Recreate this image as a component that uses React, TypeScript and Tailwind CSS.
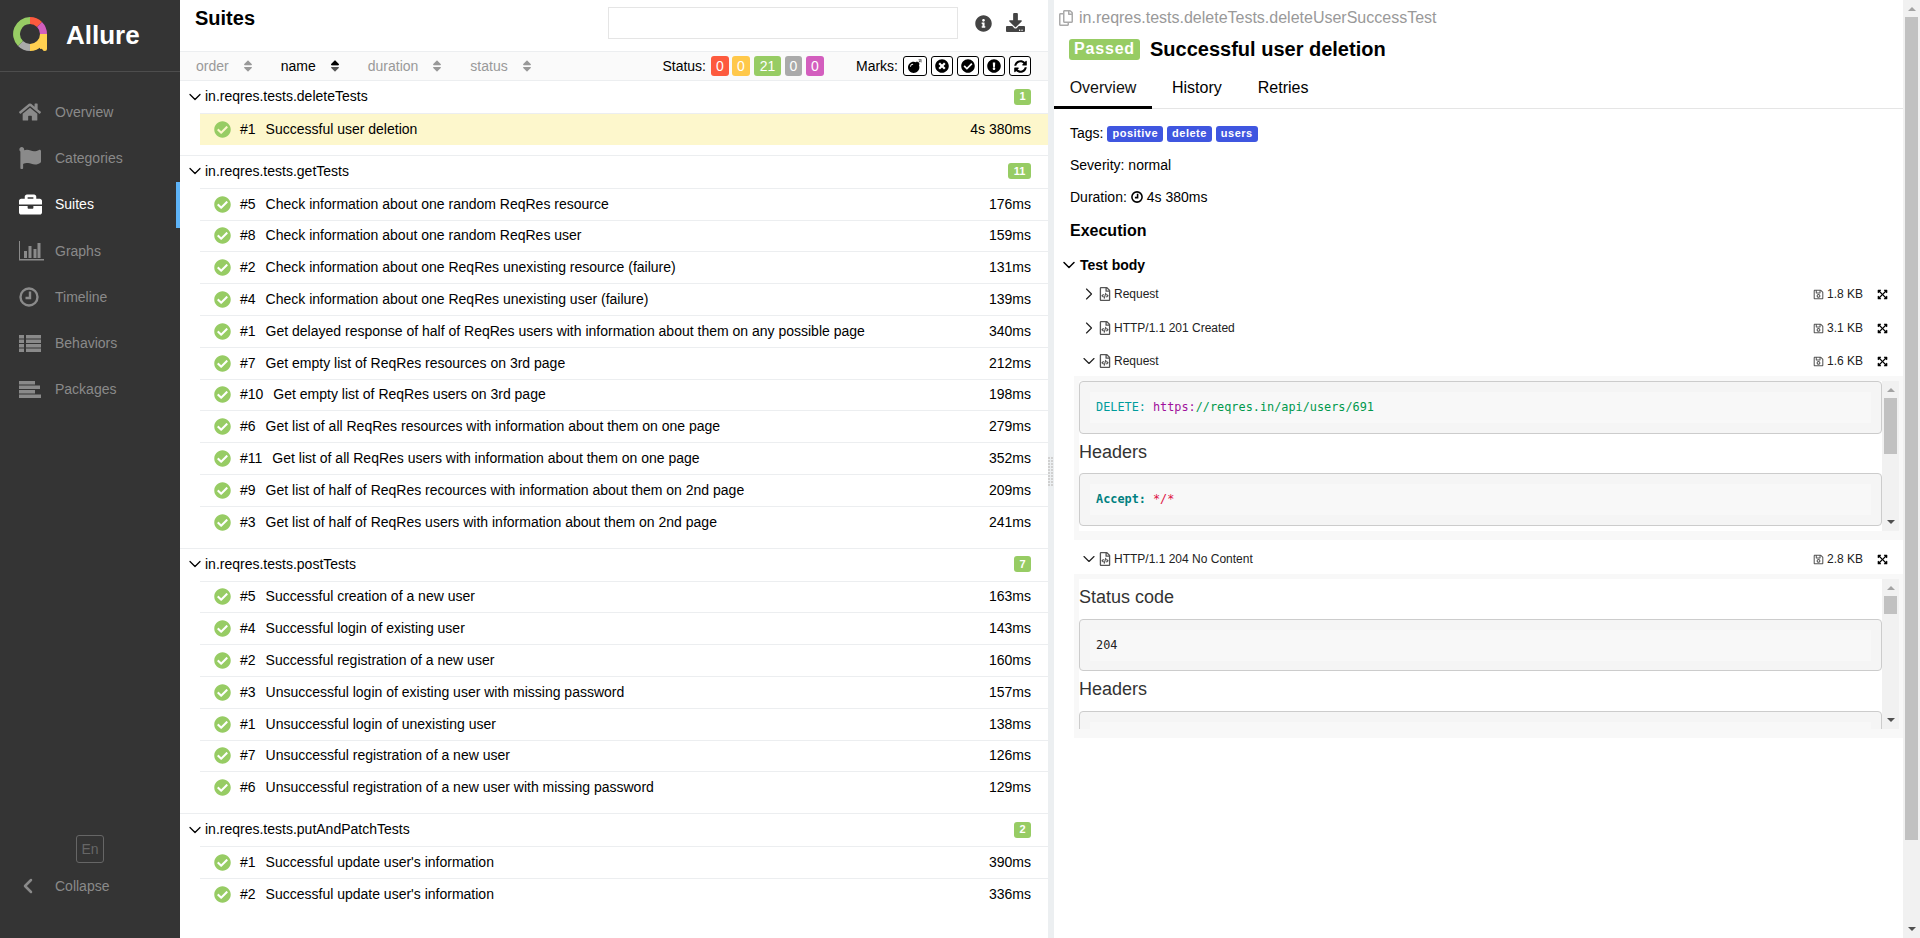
import { ReactNode } from "react";
import { ChevronDown, ChevronLeft, ChevronRight } from "lucide-react";
import {
  FaBomb,
  FaBriefcase,
  FaCheckCircle,
  FaDownload,
  FaExclamationCircle,
  FaExpandArrowsAlt,
  FaFlag,
  FaHome,
  FaInfoCircle,
  FaRegCopy,
  FaRegFileCode,
  FaRegSave,
  FaSort,
  FaSortUp,
  FaSyncAlt,
  FaTimesCircle,
} from "react-icons/fa";

function ChartIcon() {
  return (
    <svg width="25" height="20" viewBox="0 0 25 20" fill="currentColor">
      <path d="M0 0h1v18h24v1.500H0z" />
      <path d="M5 10h3v7H5zM9.500 5h3v12h-3zM14.500 8h3v9h-3zM18.500 2h3v15h-3z" />
    </svg>
  );
}

function ClockIcon({ size = 20, stroke = 2.4 }: { size?: number; stroke?: number }) {
  return (
    <svg width={size} height={size} viewBox="0 0 20 20" fill="none" stroke="currentColor" strokeWidth={stroke}>
      <circle cx="10" cy="10" r="8.500" />
      <path d="M11 4.500V11H6.500" />
    </svg>
  );
}

function ListIcon() {
  return (
    <svg width="22" height="18" viewBox="0 0 22 18" fill="currentColor">
      <path d="M0 0h5v3.500H0zM7 0h15v3.500H7zM0 4.500h5V8H0zM7 4.500h15V8H7zM0 9h5v3.500H0zM7 9h15v3.500H7zM0 13.500h5V17H0zM7 13.500h15V17H7z" />
    </svg>
  );
}

function AlignIcon() {
  return (
    <svg width="23" height="18" viewBox="0 0 23 18" fill="currentColor">
      <path d="M0 0h16v3.500H0zM0 4.500h21V8H0zM0 9h16v3.500H0zM0 13.500h22V17H0z" />
    </svg>
  );
}

const nav = [
  { label: "Overview", icon: <FaHome size={22} /> },
  { label: "Categories", icon: <FaFlag size={22} /> },
  { label: "Suites", icon: <FaBriefcase size={23} />, active: true },
  { label: "Graphs", icon: <ChartIcon /> },
  { label: "Timeline", icon: <ClockIcon /> },
  { label: "Behaviors", icon: <ListIcon /> },
  { label: "Packages", icon: <AlignIcon /> },
];

const groups = [
  {
    name: "in.reqres.tests.deleteTests",
    rows: [["#1", "Successful user deletion", "4s 380ms"]],
  },
  {
    name: "in.reqres.tests.getTests",
    rows: [
      ["#5", "Check information about one random ReqRes resource", "176ms"],
      ["#8", "Check information about one random ReqRes user", "159ms"],
      ["#2", "Check information about one ReqRes unexisting resource (failure)", "131ms"],
      ["#4", "Check information about one ReqRes unexisting user (failure)", "139ms"],
      ["#1", "Get delayed response of half of ReqRes users with information about them on any possible page", "340ms"],
      ["#7", "Get empty list of ReqRes resources on 3rd page", "212ms"],
      ["#10", "Get empty list of ReqRes users on 3rd page", "198ms"],
      ["#6", "Get list of all ReqRes resources with information about them on one page", "279ms"],
      ["#11", "Get list of all ReqRes users with information about them on one page", "352ms"],
      ["#9", "Get list of half of ReqRes recources with information about them on 2nd page", "209ms"],
      ["#3", "Get list of half of ReqRes users with information about them on 2nd page", "241ms"],
    ],
  },
  {
    name: "in.reqres.tests.postTests",
    rows: [
      ["#5", "Successful creation of a new user", "163ms"],
      ["#4", "Successful login of existing user", "143ms"],
      ["#2", "Successful registration of a new user", "160ms"],
      ["#3", "Unsuccessful login of existing user with missing password", "157ms"],
      ["#1", "Unsuccessful login of unexisting user", "138ms"],
      ["#7", "Unsuccessful registration of a new user", "126ms"],
      ["#6", "Unsuccessful registration of a new user with missing password", "129ms"],
    ],
  },
  {
    name: "in.reqres.tests.putAndPatchTests",
    rows: [
      ["#1", "Successful update user's information", "390ms"],
      ["#2", "Successful update user's information", "336ms"],
    ],
  },
];

function Logo() {
  return (
    <svg width="36" height="36" viewBox="0 0 36 36" fill="none" strokeWidth="7">
      <path d="M17 3.500A13.500 13.500 0 0 1 26.500 7.500" stroke="#fd5a3e" />
      <path d="M26.500 7.500A13.500 13.500 0 0 1 30.500 17" stroke="#d35ebe" />
      <path d="M30.500 17A13.500 13.500 0 0 1 17 30.500" stroke="#ffd050" />
      <path d="M27 17h7v15q0 2-2 2t-2.500-1.500q-.5-1-2.500-.5z" fill="#ffd050" />
      <path d="M17 30.500A13.500 13.500 0 0 1 7.500 26.500" stroke="#aaaaaa" />
      <path d="M7.500 26.500A13.500 13.500 0 0 1 17 3.500" stroke="#97cc64" />
    </svg>
  );
}

function Sidebar() {
  return (
    <aside className="w-[180px] shrink-0 h-full bg-[#343434] flex flex-col">
      <div className="h-[72px] shrink-0 border-b border-[#4d4d4d] flex items-center pl-[13px] pb-[1px]">
        <Logo />
        <span className="ml-[17px] text-[26px] font-bold text-white leading-none">Allure</span>
      </div>
      <nav className="pt-[17px] flex flex-col">
        {nav.map(({ label, icon, active }) => (
          <div
            key={label}
            className={`h-[46.300px] flex items-center text-[14px] relative ${active ? "text-white" : "text-[#8a8a8a]"}`}
          >
            <span className="w-[55px] pl-[19px] shrink-0 flex">{icon}</span>
            {label}
            {active && <span className="absolute right-0 top-0 bottom-0 w-[4px] bg-[#5db3f7]" />}
          </div>
        ))}
      </nav>
      <div className="mt-auto pb-[40px] flex flex-col">
        <div className="self-center w-[28px] h-[28px] mb-[11px] border border-[#666] rounded-[3px] text-[#666] text-[14px] flex items-center justify-center">
          En
        </div>
        <div className="flex items-center h-[24px] text-[14px] text-[#8a8a8a]">
          <span className="w-[55px] pl-[16px] shrink-0 flex">
            <ChevronLeft size={24} strokeWidth={2.500} />
          </span>
          Collapse
        </div>
      </div>
    </aside>
  );
}

function SortHead({ label, active }: { label: string; active?: boolean }) {
  return (
    <span className={`flex items-center gap-[13px] ${active ? "text-black" : "text-[#999]"}`}>
      {label}
      <span className="relative w-[9px] h-[14px] flex">
        {active ? (
          <>
            <FaSort size={14} className="text-[#555] absolute -left-[1px] top-0" />
            <FaSortUp size={14} className="text-black absolute -left-[1px] top-0" />
          </>
        ) : (
          <FaSort size={14} className="absolute -left-[1px] top-0" />
        )}
      </span>
    </span>
  );
}

function Count({ value, className }: { value: string; className: string }) {
  return (
    <span className={`h-[20px] rounded-[3px] text-white text-[14px] flex items-center justify-center ${className}`}>
      {value}
    </span>
  );
}

function Mark({ children, first }: { children: ReactNode; first?: boolean }) {
  return (
    <span
      className={`h-[20px] bg-white border border-black rounded-[3px] text-black flex items-center justify-center ${first ? "w-[24px]" : "w-[22px]"}`}
    >
      {children}
    </span>
  );
}

function SuitesPane() {
  return (
    <section className="w-[868px] shrink-0 h-full flex flex-col bg-white text-[14px] text-black">
      <div className="h-[51px] shrink-0 flex items-start pl-[15px] pr-[23px]">
        <h2 className="text-[20px] font-bold mt-[7px] leading-[23px]">Suites</h2>
        <div className="ml-auto mt-[7px] w-[350px] h-[32px] border border-[#e5e5e5]" />
        <FaInfoCircle size={17} className="ml-[17px] mt-[15px] text-[#444]" />
        <FaDownload size={19} className="ml-[14px] mt-[13px] text-[#444]" />
      </div>
      <div className="h-[30px] shrink-0 bg-[#fafafa] border-y border-[#eceef0] flex items-center pl-[16px] pr-[17px]">
        <div className="flex gap-[30px]">
          <SortHead label="order" />
          <SortHead label="name" active />
          <SortHead label="duration" />
          <SortHead label="status" />
        </div>
        <div className="ml-auto flex items-center gap-[4px]">
          <span className="mr-[1px]">Status:</span>
          <Count value="0" className="w-[18px] bg-[#fd5a3e]" />
          <Count value="0" className="w-[18px] -ml-[1px] bg-[#ffc84a]" />
          <Count value="21" className="w-[27px] bg-[#97cc64]" />
          <Count value="0" className="w-[17px] bg-[#aaaaaa]" />
          <Count value="0" className="w-[18px] bg-[#d35ebe]" />
          <span className="ml-[28px] mr-[1px]">Marks:</span>
          <Mark first><FaBomb size={14} /></Mark>
          <Mark><FaTimesCircle size={14} /></Mark>
          <Mark><FaCheckCircle size={14} /></Mark>
          <Mark><FaExclamationCircle size={14} /></Mark>
          <Mark><FaSyncAlt size={13} /></Mark>
        </div>
      </div>
      <div className="flex-1 overflow-hidden">
        {groups.map((group, i) => (
          <div key={group.name} className={i < groups.length - 1 ? "border-b border-[#eceef0] pb-[10px]" : ""}>
            <div className="h-[32px] flex items-center pl-[5px] pr-[17px] pb-[1px]">
              <ChevronDown size={20} strokeWidth={1.500} />
              <span>{group.name}</span>
              <span className="ml-auto h-[16px] px-[5.500px] rounded-[3px] bg-[#97cc64] text-white text-[11px] font-bold flex items-center">
                {group.rows.length}
              </span>
            </div>
            {group.rows.map((row, j) => (
              <div
                key={row[1] + j}
                className={`h-[31.800px] ml-[20px] pl-[14px] pr-[17px] flex items-center border-t border-[#eceef0] ${i === 0 ? "bg-[#fdf7cc]" : ""}`}
              >
                <FaCheckCircle size={17} className="text-[#97cc64] shrink-0" />
                <span className="ml-[9px] mr-[10px]">{row[0]}</span>
                <span>{row[1]}</span>
                <span className="ml-auto">{row[2]}</span>
              </div>
            ))}
          </div>
        ))}
      </div>
    </section>
  );
}

function Gutter() {
  return (
    <div className="w-[6px] shrink-0 h-full bg-[#eceff1] flex items-center">
      <div className="grid grid-cols-2 gap-[1px] mt-[4px]">
        {Array.from({ length: 20 }).map((_, i) => (
          <span key={i} className="w-[2px] h-[2px] bg-[#d0d0d0]" />
        ))}
      </div>
    </div>
  );
}

function Tag({ children }: { children: ReactNode }) {
  return (
    <span className="h-[16px] px-[5px] rounded-[3px] bg-[#3f56e0] text-white text-[11px] font-bold tracking-[0.500px] flex items-center">
      {children}
    </span>
  );
}

function StepRow({ label, size, open }: { label: string; size: string; open?: boolean }) {
  const Arrow = open ? ChevronDown : ChevronRight;
  return (
    <div className="h-[28px] flex items-center text-[12px] text-[#222] pl-[25px] pr-[15px]">
      <Arrow size={20} strokeWidth={1.400} className="-mr-[1px]" />
      <FaRegFileCode size={14} className="mr-[2px] text-[#555]" />
      <span>{label}</span>
      <FaRegSave size={11} className="ml-auto mr-[3px] text-[#555]" />
      <span className="w-[50px]">{size}</span>
      <FaExpandArrowsAlt size={11} className="text-black" />
    </div>
  );
}

function Scrollbar({ thumb }: { thumb: string }) {
  return (
    <div className="w-[17px] shrink-0 bg-[#f1f1f1] relative flex flex-col items-center justify-between py-[7px]">
      <span className="w-0 h-0 border-x-[4px] border-x-transparent border-b-[4px] border-b-[#a3a3a3]" />
      <span className={`absolute left-[2px] right-[2px] top-[17px] bg-[#c1c1c1] ${thumb}`} />
      <span className="w-0 h-0 border-x-[4px] border-x-transparent border-t-[4px] border-t-[#505050]" />
    </div>
  );
}

function CodeBox({ children, className }: { children: ReactNode; className: string }) {
  return (
    <div className={`bg-[#f5f5f5] border border-[#ccc] rounded-[4px] p-[10px] font-['DejaVu_Sans_Mono',monospace] text-[11.850px] ${className}`}>
      <div className="bg-[#f8f8f8] h-[31px] pl-[6px] flex items-center">{children}</div>
    </div>
  );
}

function Attachment({ children, thumb }: { children: ReactNode; thumb: string }) {
  return (
    <div className="ml-[20px] h-[164px] mt-[1px] bg-[#f8f8f8] pt-[5px] pl-[5px] pr-[4px]">
      <div className="h-[150px] bg-white flex overflow-hidden">
        <div className="flex-1 min-w-0">{children}</div>
        <Scrollbar thumb={thumb} />
      </div>
    </div>
  );
}

function SectionTitle({ children, className }: { children: ReactNode; className: string }) {
  return <div className={`text-[18px] text-[#333] leading-[20px] ${className}`}>{children}</div>;
}

function DetailPane() {
  return (
    <section className="flex-1 min-w-0 h-full flex flex-col bg-white text-[14px] text-black">
      <div className="h-[36px] shrink-0 flex items-center pl-[4px] text-[16px] text-[#999]">
        <FaRegCopy size={16} className="mr-[5px] text-[#aaa]" />
        in.reqres.tests.deleteTests.deleteUserSuccessTest
      </div>
      <div className="h-[26px] shrink-0 flex items-center pl-[15px]">
        <span className="w-[71px] h-[21px] rounded-[3px] bg-[#97cc64] text-white text-[16px] font-bold tracking-[0.800px] flex items-center justify-center">
          Passed
        </span>
        <h3 className="ml-[10px] text-[20px] font-bold">Successful user deletion</h3>
      </div>
      <div className="h-[47px] shrink-0 border-b border-[#e5e5e5] flex text-[16px]">
        <span className="w-[98px] flex items-center justify-center border-b-[3px] border-black h-[47px] pt-[7px] text-[#111]">Overview</span>
        <span className="ml-[20px] flex items-center pt-[5px]">History</span>
        <span className="ml-[36px] flex items-center pt-[5px]">Retries</span>
      </div>
      <div className="pl-[16px] mt-[8px] pt-[1px] h-[32px] flex items-center gap-[4px]">
        <span>Tags:</span>
        <Tag>positive</Tag>
        <Tag>delete</Tag>
        <Tag>users</Tag>
      </div>
      <div className="pl-[16px] h-[32px] flex items-center">Severity: normal</div>
      <div className="pl-[16px] h-[32px] flex items-center">
        Duration:
        <span className="mx-[4px] flex">
          <ClockIcon size={12} stroke={2.600} />
        </span>
        4s 380ms
      </div>
      <div className="pl-[16px] mt-[2px] h-[32px] flex items-center text-[16px] font-bold">Execution</div>
      <div className="pl-[5px] mt-[8px] h-[20px] flex items-center font-bold">
        <ChevronDown size={20} strokeWidth={1.800} className="mr-[1px]" />
        Test body
      </div>
      <div className="mt-[5px] flex flex-col">
        <StepRow label="Request" size="1.8 KB" />
        <div className="h-[6px]" />
        <StepRow label="HTTP/1.1 201 Created" size="3.1 KB" />
        <div className="h-[5px]" />
        <StepRow label="Request" size="1.6 KB" open />
        <Attachment thumb="h-[56px]">
          <CodeBox className="h-[53px]">
            <span className="text-[#009c9c]">DELETE:</span>
            <span className="ml-[7px] text-[#a0109c]">https:</span>
            <span className="text-[#00994d]">//reqres.in/api/users/691</span>
          </CodeBox>
          <SectionTitle className="mt-[8px]">Headers</SectionTitle>
          <CodeBox className="h-[53px] mt-[11px]">
            <span className="text-[#008080] font-bold">Accept:</span>
            <span className="ml-[7px] text-[#dd1144]">*/*</span>
          </CodeBox>
        </Attachment>
        <div className="h-[5px]" />
        <StepRow label="HTTP/1.1 204 No Content" size="2.8 KB" open />
        <Attachment thumb="h-[18px]">
          <SectionTitle className="mt-[8px]">Status code</SectionTitle>
          <CodeBox className="h-[52px] mt-[12px]">
            <span className="text-[#222]">204</span>
          </CodeBox>
          <SectionTitle className="mt-[8px]">Headers</SectionTitle>
          <CodeBox className="h-[53px] mt-[12px]">
            <span />
          </CodeBox>
        </Attachment>
      </div>
    </section>
  );
}

export default function App() {
  return (
    <div className="w-[1920px] h-[938px] flex overflow-hidden font-['Liberation_Sans',Arial,sans-serif] bg-white">
      <Sidebar />
      <SuitesPane />
      <Gutter />
      <DetailPane />
      <Scrollbar thumb="h-[823px]" />
    </div>
  );
}
